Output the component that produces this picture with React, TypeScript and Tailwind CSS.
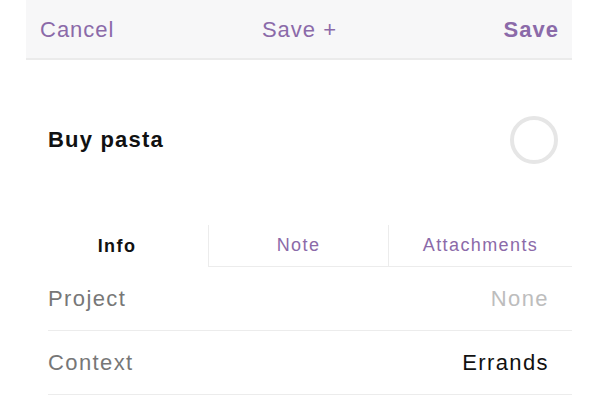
import React from 'react';

const purple = 'text-[#8b6aa9]';

const DetailRow: React.FC<{ label: string; value: string; muted?: boolean }> = ({ label, value, muted }) => (
  <div className="flex h-[64px] items-center justify-between border-b border-[#ececec] pr-[23px] tracking-[1.4px]">
    <span className="text-[22px] text-[#777777]">{label}</span>
    <span className={muted ? 'text-[22px] text-[#bdbdbd]' : 'text-[22px] text-[#111111]'}>{value}</span>
  </div>
);

export default function App() {
  return (
    <div className="h-[400px] w-[600px] overflow-hidden bg-white font-['Liberation_Sans',Arial,sans-serif]">
      <div className="mx-[26px] w-[546px]">
        {/* Nav bar */}
        <div className="grid h-[60px] grid-cols-3 items-center border-b-2 border-[#ebebeb] bg-[#f7f7f8] pl-[14px] pr-[13px] pt-[1px] text-[22px] tracking-[1px]">
          <span className={purple}>Cancel</span>
          <span className={`text-center ${purple}`}>Save +</span>
          <span className={`text-right font-bold ${purple}`}>Save</span>
        </div>

        {/* Title */}
        <div className="flex h-[163px] items-center justify-between pb-[4px] pl-[22px] pr-[14px]">
          <span className="text-[22px] font-bold tracking-[1.2px] text-[#111111]">Buy pasta</span>
          <div className="h-[48px] w-[48px] rounded-full border-[4px] border-[#e6e6e6]" />
        </div>

        {/* Tabs */}
        <div className="flex h-[44px] pt-[2px] tracking-[1.4px]">
          <div className="flex w-[182px] items-center justify-center">
            <span className="text-[18px] font-bold text-[#111111]">Info</span>
          </div>
          <div className="flex w-[180px] items-center justify-center border-b border-l border-[#ececec]">
            <span className={`text-[18px] ${purple}`}>Note</span>
          </div>
          <div className="flex flex-1 items-center justify-center border-b border-l border-[#ececec]">
            <span className={`text-[18px] ${purple}`}>Attachments</span>
          </div>
        </div>

        {/* Details */}
        <div className="pl-[22px]">
          <DetailRow label="Project" value="None" muted />
          <DetailRow label="Context" value="Errands" />
        </div>
      </div>
    </div>
  );
}
